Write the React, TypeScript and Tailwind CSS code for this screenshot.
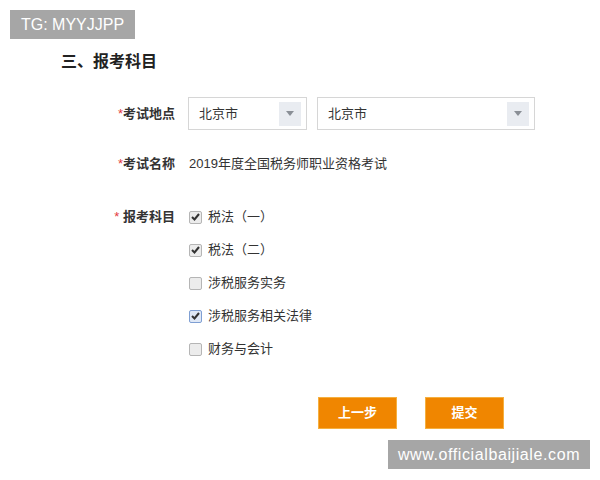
import React from "react";

const subjects = [
  { name: "税法（一）", checked: true },
  { name: "税法（二）", checked: true },
  { name: "涉税服务实务", checked: false },
  { name: "涉税服务相关法律", checked: true, focus: true },
  { name: "财务与会计", checked: false },
];

function Select({ width }: { width: string }) {
  return (
    <div className={`${width} h-[33px] border border-[#d6d6d6] bg-white flex items-center`}>
      <span className="pl-[10px] text-[13px] text-[#333]">北京市</span>
      <div className="ml-auto mr-[5px] w-[22px] h-[24px] bg-[#e9ecf1] flex items-center justify-center">
        <svg width="8" height="5" viewBox="0 0 8 5">
          <path d="M0 0 L8 0 L4 5 Z" fill="#8a8f96" />
        </svg>
      </div>
    </div>
  );
}

function Checkbox({ checked, focus }: { checked: boolean; focus?: boolean }) {
  return (
    <div
      className={`w-[13px] h-[13px] rounded-[2px] border flex items-center justify-center ${
        focus ? "border-[#7f9fd3] bg-[#dfe8f6]" : "border-[#b5b5b5] bg-[#ececec]"
      }`}
    >
      {checked && (
        <svg width="9" height="8" viewBox="0 0 9 8">
          <path d="M1 4 L3.5 6.5 L8 1" fill="none" stroke="#333" strokeWidth="2" />
        </svg>
      )}
    </div>
  );
}

export default function App() {
  return (
    <div
      className="relative w-[600px] h-[480px] bg-white overflow-hidden"
      style={{ fontFamily: '"Liberation Sans", "Noto Sans CJK SC", sans-serif' }}
    >
      {/* watermark top */}
      <div className="absolute left-[10px] top-[10px] w-[125px] h-[29px] bg-[#a6a6a6] text-white text-[16px] flex items-center justify-center">
        TG: MYYJJPP
      </div>

      <div className="pt-[52px] pl-[61px]">
        <h2 className="h-[20px] leading-[20px] text-[16px] font-bold text-[#222]">三、报考科目</h2>

        <div className="mt-[25px] flex items-center">
          <div className="w-[114px] text-right text-[13px] font-bold text-[#333]">
            <span className="text-[#e4393c] font-normal">*</span>考试地点
          </div>
          <div className="ml-[13px] flex gap-[10px]">
            <Select width="w-[119px]" />
            <Select width="w-[218px]" />
          </div>
        </div>

        <div className="mt-[24px] h-[20px] flex items-center">
          <div className="w-[114px] text-right text-[13px] font-bold text-[#333]">
            <span className="text-[#e4393c] font-normal">*</span>考试名称
          </div>
          <div className="ml-[14px] text-[13px] text-[#333]">2019年度全国税务师职业资格考试</div>
        </div>

        <div className="mt-[33px] flex items-start">
          <div className="w-[114px] h-[20px] leading-[20px] text-right text-[13px] font-bold text-[#333]">
            <span className="text-[#e4393c] font-normal">* </span>报考科目
          </div>
          <div className="ml-[14px] flex flex-col gap-[13px]">
            {subjects.map((s) => (
              <div key={s.name} className="h-[20px] flex items-center gap-[6px]">
                <Checkbox checked={s.checked} focus={s.focus} />
                <span className="text-[13px] text-[#333]">{s.name}</span>
              </div>
            ))}
          </div>
        </div>

        <div className="mt-[38px] ml-[257px] flex gap-[28px]">
          <button className="w-[79px] h-[32px] bg-[#f08600] border border-[#f5b040] text-white text-[13px] font-bold">
            上一步
          </button>
          <button className="w-[79px] h-[32px] bg-[#f08600] border border-[#f5b040] text-white text-[13px] font-bold">
            提交
          </button>
        </div>
      </div>

      {/* watermark bottom */}
      <div className="absolute left-[388px] top-[440px] w-[202px] h-[29px] bg-[#a6a6a6] text-white text-[16px] tracking-[0.6px] flex items-center justify-center">
        www.officialbaijiale.com
      </div>
    </div>
  );
}
